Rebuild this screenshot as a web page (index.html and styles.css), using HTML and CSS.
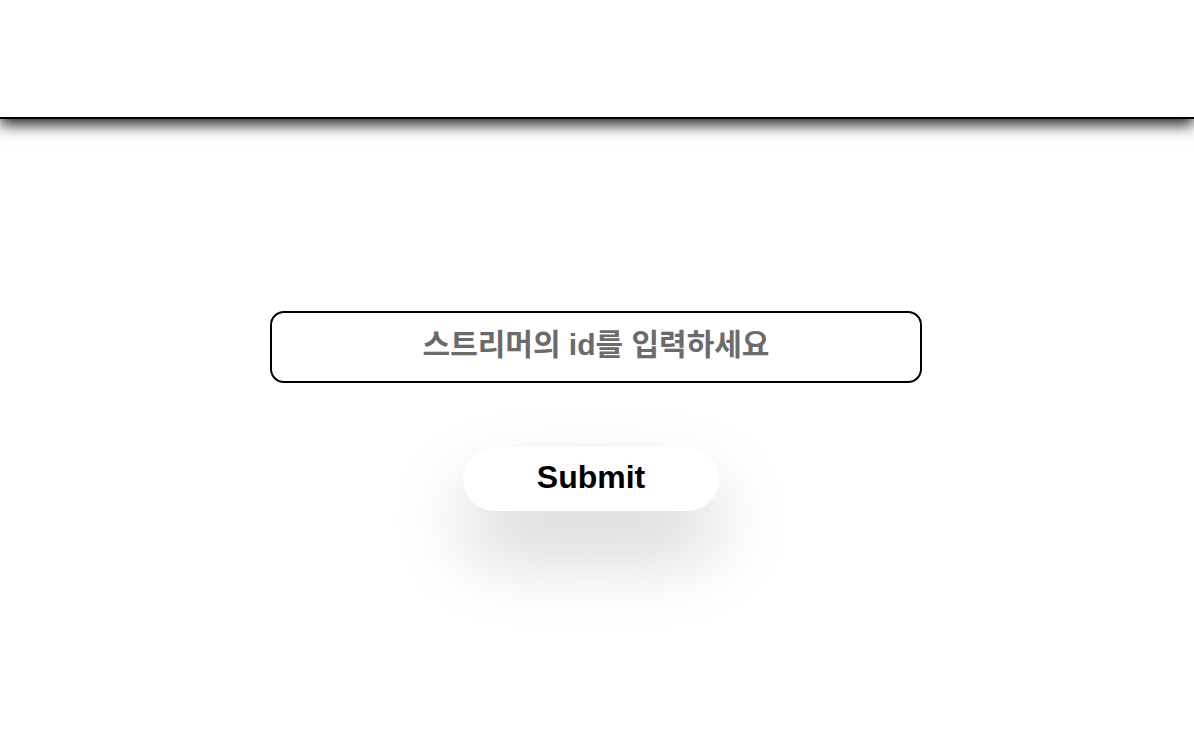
FILE: index.html
```html
<!DOCTYPE html>
<html lang="ko">
<head>
<meta charset="utf-8">
<title>Streamer</title>
<link rel="stylesheet" href="styles.css">
</head>
<body>
<header class="top-bar"></header>
<main class="content">
  <form class="search-form">
    <input class="id-input" type="text" placeholder="스트리머의 id를 입력하세요">
    <button class="submit-btn" type="button">Submit</button>
  </form>
</main>
</body>
</html>
```

FILE: styles.css
```css
html, body {
  margin: 0;
  padding: 0;
  background: #ffffff;
  font-family: "Liberation Sans", "Noto Sans CJK KR", sans-serif;
}

body {
  min-height: 100vh;
}

.top-bar {
  height: 117px;
  border-bottom: 2px solid #000000;
  box-shadow: 0 6px 14px rgba(0, 0, 0, 0.85);
  background: #ffffff;
  position: relative;
  z-index: 1;
}

.content {
  display: flex;
  justify-content: center;
  padding-top: 192px;
  padding-bottom: 160px;
}

.search-form {
  display: flex;
  flex-direction: column;
  align-items: center;
  gap: 64px;
}

.id-input {
  box-sizing: border-box;
  width: 652px;
  height: 72px;
  margin-left: -2px;
  border: 2px solid #000000;
  border-radius: 14px;
  background: #ffffff;
  text-align: center;
  font-family: "Liberation Sans", "Noto Sans CJK KR", sans-serif;
  font-size: 30px;
  font-weight: bold;
  color: #000000;
  outline: none;
  padding: 0 16px 4px;
}

.id-input::placeholder {
  color: #6b6b6b;
  opacity: 1;
}

.submit-btn {
  width: 256px;
  height: 64px;
  margin-right: 12px;
  padding: 0 0 3px;
  border: none;
  border-radius: 32px;
  background: #ffffff;
  font-family: "Liberation Sans", sans-serif;
  font-size: 32px;
  font-weight: bold;
  color: #000000;
  cursor: pointer;
  box-shadow: 0 40px 80px rgba(0, 0, 0, 0.2);
}
```
